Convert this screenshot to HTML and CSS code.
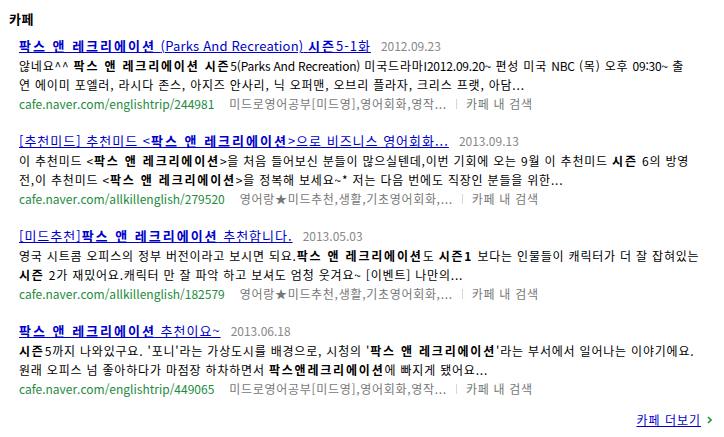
FILE: index.html
```html
<!DOCTYPE html>
<html lang="ko">
<head>
<meta charset="utf-8">
<link rel="stylesheet" href="styles.css">
</head>
<body>
<div class="section">
  <h2 class="heading">카페</h2>
  <ul class="results">
    <li class="item">
      <div class="title-row"><a class="title" href="#"><b>팍스 앤 레크리에이션</b> <span class="en">(Parks And Recreation)</span> <b>시즌</b>5-1화</a><span class="date">2012.09.23</span></div>
      <div class="desc">
        <div class="line">않네요^^ <b>팍스 앤 레크리에이션 시즌</b><span class="en">5(Parks And Recreation)</span> 미국드라마<span class="en">I2012.09.20~</span> 편성 미국 <span class="en">NBC</span> (목) 오후 <span class="en">09:30~</span> 출</div>
        <div class="line">연 에이미 포엘러, 라시다 존스, 아지즈 안사리, 닉 오퍼맨, 오브리 플라자, 크리스 프랫, 아담...</div>
      </div>
      <div class="meta"><span class="url">cafe.naver.com/englishtrip/244981</span><span class="cafe">미드로영어공부[미드영],영어회화,영작...</span><span class="sep"></span><a class="search" href="#">카페 내 검색</a></div>
    </li>
    <li class="item">
      <div class="title-row"><a class="title" href="#">[추천미드] 추천미드 &lt;<b>팍스 앤 레크리에이션</b>&gt;으로 비즈니스 영어회화...</a><span class="date">2013.09.13</span></div>
      <div class="desc">
        <div class="line">이 추천미드 &lt;<b>팍스 앤 레크리에이션</b>&gt;을 처음 들어보신 분들이 많으실텐데,이번 기회에 오는 9월 이 추천미드 <b>시즌</b> 6의 방영</div>
        <div class="line">전,이 추천미드 &lt;<b>팍스 앤 레크리에이션</b>&gt;을 정복해 보세요~* 저는 다음 번에도 직장인 분들을 위한...</div>
      </div>
      <div class="meta"><span class="url">cafe.naver.com/allkillenglish/279520</span><span class="cafe">영어랑★미드추천,생활,기초영어회화,...</span><span class="sep"></span><a class="search" href="#">카페 내 검색</a></div>
    </li>
    <li class="item">
      <div class="title-row"><a class="title" href="#">[미드추천]<b>팍스 앤 레크리에이션</b> 추천합니다.</a><span class="date">2013.05.03</span></div>
      <div class="desc">
        <div class="line">영국 시트콤 오피스의 정부 버전이라고 보시면 되요.<b>팍스 앤 레크리에이션</b>도 <b>시즌1</b> 보다는 인물들이 캐릭터가 더 잘 잡혀있는</div>
        <div class="line"><b>시즌</b> 2가 재밌어요.캐릭터 만 잘 파악 하고 보셔도 엄청 웃겨요~ [이벤트] 나만의...</div>
      </div>
      <div class="meta"><span class="url">cafe.naver.com/allkillenglish/182579</span><span class="cafe">영어랑★미드추천,생활,기초영어회화,...</span><span class="sep"></span><a class="search" href="#">카페 내 검색</a></div>
    </li>
    <li class="item">
      <div class="title-row"><a class="title" href="#"><b>팍스 앤 레크리에이션</b> 추천이요~</a><span class="date">2013.06.18</span></div>
      <div class="desc">
        <div class="line"><b>시즌</b>5까지 나와있구요. '포니'라는 가상도시를 배경으로, 시청의 '<b>팍스 앤 레크리에이션</b>'라는 부서에서 일어나는 이야기에요.</div>
        <div class="line">원래 오피스 넘 좋아하다가 마점장 하차하면서 <b>팍스앤레크리에이션</b>에 빠지게 됐어요...</div>
      </div>
      <div class="meta"><span class="url">cafe.naver.com/englishtrip/449065</span><span class="cafe">미드로영어공부[미드영],영어회화,영작...</span><span class="sep"></span><a class="search" href="#">카페 내 검색</a></div>
    </li>
  </ul>
  <div class="more"><a class="more-link" href="#">카페 더보기</a><svg class="arrow" width="5" height="8" viewBox="0 0 5 8"><path d="M1 1 L4 4 L1 7" fill="none" stroke="#1a9a3a" stroke-width="1.6"/></svg></div>
</div>
</body>
</html>
```

FILE: styles.css
```css
html, body {
  margin: 0;
  padding: 0;
  background: #fff;
}
body {
  font-family: "Noto Sans CJK KR", "Noto Sans", sans-serif;
  font-size: 12px;
  color: #000;
}
.section {
  width: 724px;
  padding: 9px 0 0 9px;
  box-sizing: border-box;
}
.heading {
  margin: 0;
  font-size: 13px;
  font-weight: bold;
  line-height: 19px;
  letter-spacing: 0.5px;
}
.results {
  list-style: none;
  margin: 8px 0 0 0;
  padding: 0 0 0 10px;
  display: flex;
  flex-direction: column;
  gap: 18px;
}
.item {
  display: flex;
  flex-direction: column;
}
.title-row {
  display: flex;
  align-items: baseline;
  gap: 10px;
  line-height: 19px;
  margin-bottom: 1px;
  white-space: nowrap;
}
.title {
  color: #0000cc;
  text-decoration: underline;
  font-size: 13px;
  letter-spacing: 1px;
}
.title b {
  font-weight: bold;
  letter-spacing: 2px;
}
.title .en {
  letter-spacing: 0.2px;
}
.date {
  color: #888;
  font-size: 12px;
}
.desc .line {
  line-height: 19px;
  white-space: nowrap;
  letter-spacing: 0.8px;
  color: #000;
}
.desc b {
  font-weight: bold;
  letter-spacing: 1.8px;
}
.desc .en {
  letter-spacing: -0.2px;
}
.meta {
  display: flex;
  align-items: center;
  line-height: 19px;
  white-space: nowrap;
}
.url {
  color: #228b3c;
  margin-right: 15px;
}
.cafe {
  color: #777;
  letter-spacing: 0.7px;
}
.sep {
  width: 1px;
  height: 10px;
  background: #d6d6d6;
  margin: 0 9px;
}
.search {
  color: #777;
  text-decoration: none;
  letter-spacing: 0.7px;
}
.more {
  display: flex;
  justify-content: flex-end;
  align-items: center;
  gap: 6px;
  margin-top: 12px;
  padding-right: 12px;
  line-height: 19px;
}
.more-link {
  color: #0000cc;
  text-decoration: underline;
  letter-spacing: 1px;
}
.arrow { display: block; }
```
